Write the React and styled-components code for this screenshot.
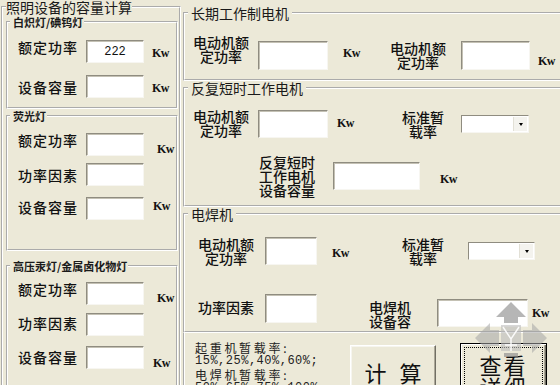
import React from 'react';
import styled, { createGlobalStyle, css } from 'styled-components';

const GlobalStyle = createGlobalStyle`
  html, body {
    margin: 0;
    padding: 0;
    background: #ece9d8;
  }
  body {
    font-family: "Noto Sans CJK SC", "Liberation Sans", sans-serif;
    color: #111;
  }
`;

const Window = styled.div`
  position: relative;
  display: flex;
  width: 560px;
  height: 385px;
  overflow: hidden;
  background: #ece9d8;
`;

const LeftColumn = styled.div`
  flex: none;
  width: 181px;
`;

const RightColumn = styled.div`
  flex: none;
  width: 400px;
  padding-top: 6px;
`;

// etched group frame, like a win32 group box
const Group = styled.fieldset`
  box-sizing: border-box;
  min-width: 0;
  width: ${(p) => p.$w}px;
  margin: ${(p) => p.$mt || 0}px 0 0 ${(p) => p.$ml || 0}px;
  padding: ${(p) => p.$pad};
  border: 2px groove #fff;
`;

const Legend = styled.legend`
  margin-left: ${(p) => p.$ml || 0}px;
  padding: ${(p) => p.$pad || '0'};
  font-size: ${(p) => p.$size}px;
  line-height: ${(p) => p.$lh}px;
  font-weight: ${(p) => (p.$bold ? 700 : 400)};
  color: #1a1a1a;
  white-space: nowrap;
`;

const Row = styled.div`
  display: flex;
  align-items: flex-start;
  margin-top: ${(p) => p.$mt || 0}px;
  padding-left: ${(p) => p.$pl || 0}px;
`;

const Label = styled.div`
  flex: none;
  width: ${(p) => p.$w || 60}px;
  margin: ${(p) => p.$mt || 0}px 0 0 ${(p) => p.$ml || 0}px;
  font-size: 14px;
  font-weight: 500;
  line-height: ${(p) => p.$lh || 14}px;
  letter-spacing: ${(p) => p.$ls || 0}px;
  text-align: ${(p) => p.$align || 'center'};
  white-space: nowrap;
  color: #111;
  ${(p) =>
    p.$h &&
    css`
      height: ${p.$h}px;
      overflow: hidden;
    `}
`;

const TextBox = styled.input`
  flex: none;
  box-sizing: border-box;
  width: ${(p) => p.$w}px;
  height: ${(p) => p.$h}px;
  margin: ${(p) => p.$mt || 0}px 0 0 ${(p) => p.$ml || 0}px;
  padding: 0;
  border: 1px solid;
  border-color: #8f8c80 #f7f6f1 #f7f6f1 #8f8c80;
  box-shadow: inset 1px 1px 0 #c4c1b4;
  background: #fff;
  font: 12px "Liberation Mono", monospace;
  color: #111;
  text-align: center;
  outline: none;
`;

const Unit = styled.span`
  flex: none;
  display: block;
  width: 18px;
  margin: ${(p) => p.$mt || 0}px 0 0 ${(p) => p.$ml || 0}px;
  font: bold 12px/11px "Liberation Serif", serif;
  letter-spacing: -0.5px;
  color: #111;
`;

const Combo = styled.div`
  flex: none;
  box-sizing: border-box;
  display: flex;
  justify-content: flex-end;
  width: ${(p) => p.$w}px;
  height: 18px;
  margin: ${(p) => p.$mt || 0}px 0 0 ${(p) => p.$ml || 0}px;
  padding: 1px;
  border: 1px solid;
  border-color: #8f8c80 #f7f6f1 #f7f6f1 #8f8c80;
  background: #fff;
`;

const ComboButton = styled.span`
  display: flex;
  align-items: center;
  justify-content: center;
  width: 13px;
  background: #f4f3ee;
  border-left: 1px solid #e2e0d6;
  &::after {
    content: '';
    border-left: 2px solid transparent;
    border-right: 2px solid transparent;
    border-top: 3px solid #000;
  }
`;

const BottomPanel = styled.div`
  display: flex;
  align-items: flex-start;
  height: 60px;
  margin-left: 2px;
  padding-left: 10px;
  border-left: 2px groove #fff;
`;

const Notes = styled.div`
  flex: none;
  width: 155px;
  padding-top: 8px;
  color: #222;
`;

const NoteLine = styled.div`
  font-size: 12px;
  line-height: 13.5px;
  white-space: nowrap;
  font-family: ${(p) =>
    p.$cn ? '"Noto Sans CJK SC", sans-serif' : '"Liberation Mono", monospace'};
  letter-spacing: ${(p) => (p.$cn ? 2.7 : 0.5)}px;
`;

const Button = styled.button`
  flex: none;
  box-sizing: border-box;
  width: ${(p) => p.$w}px;
  height: ${(p) => p.$h}px;
  margin: ${(p) => p.$mt}px 0 0 ${(p) => p.$ml || 0}px;
  padding: 0;
  font: 22px/22px "Noto Sans CJK SC", sans-serif;
  letter-spacing: ${(p) => p.$ls || 0}px;
  word-spacing: 8px;
  color: #111;
  background: #ece9d8;
  border: 1px solid;
  border-color: #fff #716f64 #716f64 #fff;
  box-shadow: inset -1px -1px 0 #aca899, inset 1px 1px 0 #f6f5ef;
  ${(p) =>
    p.$default &&
    css`
      border-color: #000;
      box-shadow: inset 1px 1px 0 #fff, inset -1px -1px 0 #716f64,
        inset -2px -2px 0 #aca899;
      outline: 1px dotted #000;
      outline-offset: -5px;
    `}
`;

const Watermark = styled.svg`
  position: absolute;
  left: 474px;
  top: 301px;
  pointer-events: none;
`;

function LampRow({ mt, label, labelMt, value, unitMt, unitMl }) {
  return (
    <Row $mt={mt}>
      <Label $w={68} $align="left" $ls={1} $lh={15} $mt={labelMt}>
        {label}
      </Label>
      <TextBox $w={58} $h={23} readOnly defaultValue={value || ''} />
      {unitMt !== undefined && (
        <Unit $mt={unitMt} $ml={unitMl}>
          Kw
        </Unit>
      )}
    </Row>
  );
}

function Logo() {
  return (
    <Watermark width="74" height="56" viewBox="0 0 74 56">
      <g fill="#8a8a8a" opacity="0.62">
        <polygon points="37,1 52,16 44,16 44,22 30,22 30,16 22,16" />
        <polygon points="37,73 52,58 44,58 44,52 30,52 30,58 22,58" />
      </g>
      <g fill="#a6a6a6" opacity="0.55">
        <polygon points="1,37 16,22 16,29 25,29 25,45 16,45 16,52" />
        <polygon points="73,37 58,22 58,29 49,29 49,45 58,45 58,52" />
      </g>
      <rect x="27" y="24" width="20" height="26" fill="#bdbdbd" opacity="0.6" />
      <path
        d="M29 26 L37 38 L45 26 M37 38 V50 M31 44 H43"
        stroke="#fff"
        strokeWidth="1.5"
        fill="none"
        opacity="0.9"
      />
    </Watermark>
  );
}

export default function App() {
  return (
    <>
      <GlobalStyle />
      <Window>
        <LeftColumn>
          <Group $ml={1} $w={180} $pad="2px 1px 0 3px">
            <Legend $size={14} $lh={14}>
              照明设备的容量计算
            </Legend>

            <Group $w={172} $pad="0 0 9px 10px">
              <Legend $size={11} $lh={12} $bold $ml={-8} $pad="0 1px 0 3px">
                白炽灯/碘钨灯
              </Legend>
              <LampRow mt={12} label="额定功率" labelMt={0} value="222" unitMt={8} unitMl={8} />
              <LampRow mt={12} label="设备容量" labelMt={5} unitMt={8} unitMl={8} />
            </Group>

            <Group $w={172} $mt={1} $pad="0 0 29px 10px">
              <Legend $size={11} $lh={12} $bold $ml={-8} $pad="0 1px 0 3px">
                荧光灯
              </Legend>
              <LampRow mt={11} label="额定功率" labelMt={0} unitMt={11} unitMl={13} />
              <LampRow mt={7} label="功率因素" labelMt={5} />
              <LampRow mt={11} label="设备容量" labelMt={3} unitMt={4} unitMl={9} />
            </Group>

            <Group $w={172} $mt={9} $pad="0 0 20px 10px">
              <Legend $size={11} $lh={12} $bold $ml={-8} $pad="0 1px 0 3px">
                高压汞灯/金属卤化物灯
              </Legend>
              <LampRow mt={10} label="额定功率" labelMt={0} unitMt={11} unitMl={13} />
              <LampRow mt={8} label="功率因素" labelMt={3} />
              <LampRow mt={10} label="设备容量" labelMt={4} unitMt={12} unitMl={9} />
            </Group>
          </Group>
        </LeftColumn>

        <RightColumn>
          <Group $ml={2} $w={400} $pad="0 0 9px 0">
            <Legend $size={14} $lh={14} $ml={3} $pad="0 3px">
              长期工作制电机
            </Legend>
            <Row $mt={15} $pl={6}>
              <Label>
                电动机额
                <br />
                定功率
              </Label>
              <TextBox $w={70} $h={29} $mt={6} $ml={7} readOnly />
              <Unit $mt={13} $ml={15}>
                Kw
              </Unit>
              <Label $mt={6} $ml={27}>
                电动机额
                <br />
                定功率
              </Label>
              <TextBox $w={69} $h={29} $mt={6} $ml={13} readOnly />
              <Unit $mt={21} $ml={8}>
                Kw
              </Unit>
            </Row>
          </Group>

          <Group $ml={2} $w={400} $pad="0 0 8px 0">
            <Legend $size={14} $lh={14} $ml={3} $pad="0 3px">
              反复短时工作电机
            </Legend>
            <Row $mt={14} $pl={6}>
              <Label>
                电动机额
                <br />
                定功率
              </Label>
              <TextBox $w={70} $h={28} $mt={1} $ml={7} readOnly />
              <Unit $mt={9} $ml={9}>
                Kw
              </Unit>
              <Label $mt={1} $ml={38}>
                标准暂
                <br />
                载率
              </Label>
              <Combo $w={68} $mt={6} $ml={8}>
                <ComboButton />
              </Combo>
            </Row>
            <Row $mt={17} $pl={72}>
              <Label>
                反复短时
                <br />
                工作电机
                <br />
                设备容量
              </Label>
              <TextBox $w={87} $h={28} $mt={7} $ml={16} readOnly />
              <Unit $mt={19} $ml={20}>
                Kw
              </Unit>
            </Row>
          </Group>

          <Group $ml={2} $w={400} $pad="0 0 1px 0">
            <Legend $size={14} $lh={14} $ml={3} $pad="0 3px">
              电焊机
            </Legend>
            <Row $mt={16} $pl={11}>
              <Label>
                电动机额
                <br />
                定功率
              </Label>
              <TextBox $w={52} $h={28} $ml={9} readOnly />
              <Unit $mt={11} $ml={15}>
                Kw
              </Unit>
              <Label $ml={43}>
                标准暂
                <br />
                载率
              </Label>
              <Combo $w={67} $mt={5} $ml={15}>
                <ComboButton />
              </Combo>
            </Row>
            <Row $mt={29} $pl={11}>
              <Label $mt={6}>功率因素</Label>
              <TextBox $w={52} $h={29} $ml={9} readOnly />
              <Label $mt={6} $ml={43} $h={30}>
                电焊机
                <br />
                设备容
                <br />量
              </Label>
              <TextBox $w={91} $h={28} $mt={5} $ml={17} readOnly />
              <Unit $mt={14} $ml={4}>
                Kw
              </Unit>
            </Row>
          </Group>

          <BottomPanel>
            <Notes>
              <NoteLine $cn>起重机暂载率:</NoteLine>
              <NoteLine>15%,25%,40%,60%;</NoteLine>
              <NoteLine $cn>电焊机暂载率:</NoteLine>
              <NoteLine>50%,65%,75%,100%</NoteLine>
            </Notes>
            <Button $w={86} $h={54} $mt={12}>
              计 算
            </Button>
            <Button $w={87} $h={63} $mt={10} $ml={24} $ls={2} $default>
              查看
              <br />
              详细
            </Button>
          </BottomPanel>
        </RightColumn>

        <Logo />
      </Window>
    </>
  );
}
